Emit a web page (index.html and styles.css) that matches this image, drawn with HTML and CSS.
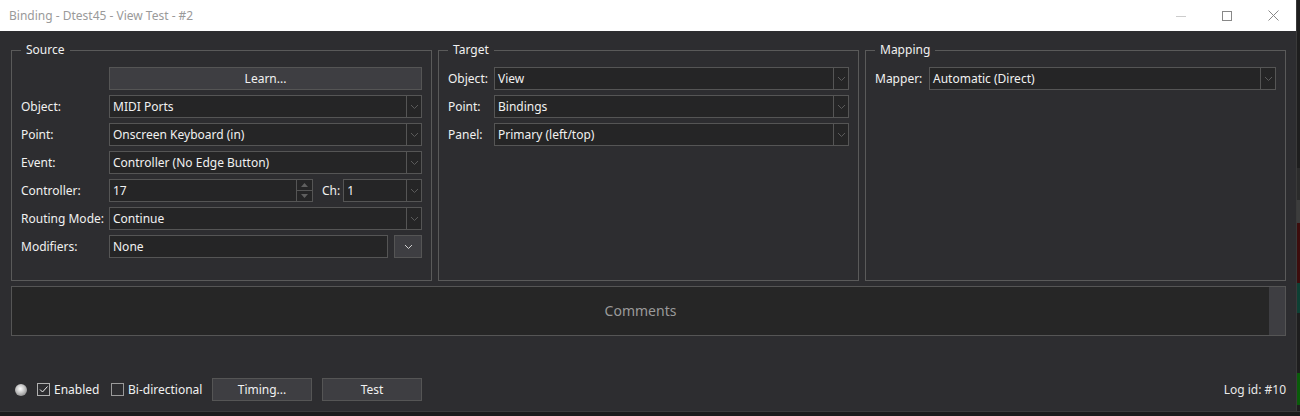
FILE: index.html
```html
<!DOCTYPE html>
<html lang="en">
<head>
    <meta charset="UTF-8">
    <title>Binding - Dtest45 - View Test - #2</title>
    <link rel="stylesheet" href="styles.css">
</head>
<body>
<div class="screen">
    <div class="top">
        <div class="window">
            <div class="titlebar">
                <span class="title">Binding - Dtest45 - View Test - #2</span>
                <div class="caption">
                    <div class="cap-btn">
                        <svg width="10" height="10" viewBox="0 0 10 10"><line x1="0" y1="5.5" x2="10" y2="5.5" stroke="#ccc" stroke-width="1"/></svg>
                    </div>
                    <div class="cap-btn">
                        <svg width="10" height="10" viewBox="0 0 10 10"><rect x="0.5" y="0.5" width="9" height="9" fill="none" stroke="#888" stroke-width="1"/></svg>
                    </div>
                    <div class="cap-btn">
                        <svg width="11" height="11" viewBox="0 0 11 11"><path d="M0.5 0.5 L10.5 10.5 M10.5 0.5 L0.5 10.5" stroke="#888" stroke-width="1"/></svg>
                    </div>
                </div>
            </div>

            <div class="content">
                <div class="groups">
                    <!-- Source -->
                    <fieldset class="group">
                        <legend>Source</legend>
                        <div class="form form-source">
                            <span></span>
                            <div class="btn">Learn...</div>

                            <label>Object:</label>
                            <div class="combo"><span class="value">MIDI Ports</span><span class="arrow"><svg width="7" height="4" viewBox="0 0 7 4"><path d="M0 0 L3.5 3.5 L7 0" fill="none" stroke="#5a5a5a"/></svg></span></div>

                            <label>Point:</label>
                            <div class="combo"><span class="value">Onscreen Keyboard (in)</span><span class="arrow"><svg width="7" height="4" viewBox="0 0 7 4"><path d="M0 0 L3.5 3.5 L7 0" fill="none" stroke="#5a5a5a"/></svg></span></div>

                            <label>Event:</label>
                            <div class="combo"><span class="value">Controller (No Edge Button)</span><span class="arrow"><svg width="7" height="4" viewBox="0 0 7 4"><path d="M0 0 L3.5 3.5 L7 0" fill="none" stroke="#5a5a5a"/></svg></span></div>

                            <label>Controller:</label>
                            <div class="split">
                                <div class="spin">
                                    <span class="value">17</span>
                                    <span class="spin-btns">
                                        <span class="spin-up"><svg width="7" height="4" viewBox="0 0 7 4"><path d="M0 4 L3.5 0 L7 4 Z" fill="#5f5f5f"/></svg></span>
                                        <span class="spin-down"><svg width="7" height="4" viewBox="0 0 7 4"><path d="M0 0 L3.5 4 L7 0 Z" fill="#5f5f5f"/></svg></span>
                                    </span>
                                </div>
                                <span class="ch-label">Ch:</span>
                                <div class="combo"><span class="value">1</span><span class="arrow"><svg width="7" height="4" viewBox="0 0 7 4"><path d="M0 0 L3.5 3.5 L7 0" fill="none" stroke="#5a5a5a"/></svg></span></div>
                            </div>

                            <label>Routing Mode:</label>
                            <div class="combo"><span class="value">Continue</span><span class="arrow"><svg width="7" height="4" viewBox="0 0 7 4"><path d="M0 0 L3.5 3.5 L7 0" fill="none" stroke="#5a5a5a"/></svg></span></div>

                            <label>Modifiers:</label>
                            <div class="split">
                                <div class="textbox"><span class="value">None</span></div>
                                <div class="btn btn-drop"><svg width="7" height="4" viewBox="0 0 7 4"><path d="M0 0 L3.5 3.5 L7 0" fill="none" stroke="#d0d0d0"/></svg></div>
                            </div>
                        </div>
                    </fieldset>

                    <!-- Target -->
                    <fieldset class="group">
                        <legend>Target</legend>
                        <div class="form form-target">
                            <label>Object:</label>
                            <div class="combo"><span class="value">View</span><span class="arrow"><svg width="7" height="4" viewBox="0 0 7 4"><path d="M0 0 L3.5 3.5 L7 0" fill="none" stroke="#5a5a5a"/></svg></span></div>

                            <label>Point:</label>
                            <div class="combo"><span class="value">Bindings</span><span class="arrow"><svg width="7" height="4" viewBox="0 0 7 4"><path d="M0 0 L3.5 3.5 L7 0" fill="none" stroke="#5a5a5a"/></svg></span></div>

                            <label>Panel:</label>
                            <div class="combo"><span class="value">Primary (left/top)</span><span class="arrow"><svg width="7" height="4" viewBox="0 0 7 4"><path d="M0 0 L3.5 3.5 L7 0" fill="none" stroke="#5a5a5a"/></svg></span></div>
                        </div>
                    </fieldset>

                    <!-- Mapping -->
                    <fieldset class="group">
                        <legend>Mapping</legend>
                        <div class="form form-mapping">
                            <label>Mapper:</label>
                            <div class="combo"><span class="value">Automatic (Direct)</span><span class="arrow"><svg width="7" height="4" viewBox="0 0 7 4"><path d="M0 0 L3.5 3.5 L7 0" fill="none" stroke="#5a5a5a"/></svg></span></div>
                        </div>
                    </fieldset>
                </div>

                <div class="comments">
                    <div class="comments-text">Comments</div>
                    <div class="scrollbar"></div>
                </div>

                <div class="footer">
                    <span class="led"></span>
                    <span class="check check-enabled">
                        <span class="box"><svg width="11" height="11" viewBox="0 0 11 11"><path d="M2 5.5 L4.5 8 L9.5 2.5" fill="none" stroke="#f0f0f0" stroke-width="1"/></svg></span>
                        Enabled
                    </span>
                    <span class="check check-bidi">
                        <span class="box"></span>
                        Bi-directional
                    </span>
                    <div class="btn btn-foot">Timing...</div>
                    <div class="btn btn-foot">Test</div>
                    <span class="log-id">Log id: #10</span>
                </div>
            </div>
        </div>
        <div class="side">
            <span class="side-a"></span>
            <span class="side-b"></span>
            <span class="side-c"></span>
            <span class="side-d"></span>
            <span class="side-e"></span>
        </div>
    </div>
    <div class="under"></div>
</div>
</body>
</html>
```

FILE: styles.css
```css
body {
    margin: 0;
    background-color: #1c1c1c;
    font-family: "Noto Sans", "Open Sans", sans-serif;
    font-size: 12px;
    color: #f1f1f1;
}

.screen {
    width: 1300px;
    height: 416px;
    display: flex;
    flex-direction: column;
}

.top {
    display: flex;
    height: 412px;
}

.window {
    width: 1296px;
    background-color: #2d2d30;
    display: flex;
    flex-direction: column;
}

/* Title bar */
.titlebar {
    height: 31px;
    background-color: #ffffff;
    display: flex;
    align-items: center;
    padding-left: 9px;
}

.title {
    flex: 1;
    color: #9a9a9a;
}

.caption {
    display: flex;
    height: 100%;
}

.cap-btn {
    width: 46px;
    display: flex;
    align-items: center;
    justify-content: center;
}

/* Main content */
.content {
    flex: 1;
    display: flex;
    flex-direction: column;
    padding: 11px 10px 0 11px;
}

.groups {
    display: grid;
    grid-template-columns: repeat(3, 1fr);
    gap: 6px;
    height: 239px;
}

.group {
    margin: 0;
    min-width: 0;
    border: 1px solid #5a5a5a;
    padding: 9px 9px 0 9px;
}

.group legend {
    padding: 0 5px;
    line-height: 16px;
    color: #f1f1f1;
}

.form {
    display: grid;
    grid-auto-rows: 23px;
    row-gap: 5px;
    align-items: center;
}

.form-source {
    grid-template-columns: 88px 1fr;
}

.form-target {
    grid-template-columns: 46px 1fr;
}

.form-mapping {
    grid-template-columns: 54px 1fr;
}

.form label {
    white-space: nowrap;
}

/* Controls */
.combo,
.spin,
.textbox {
    height: 23px;
    box-sizing: border-box;
    display: flex;
    border: 1px solid #555555;
    background-color: #252526;
}

.value {
    flex: 1;
    padding-left: 3px;
    line-height: 21px;
    white-space: nowrap;
    overflow: hidden;
}

.combo .arrow {
    width: 14px;
    border-left: 1px solid #555555;
    display: flex;
    align-items: center;
    justify-content: center;
}

.split {
    display: flex;
    align-items: center;
    height: 23px;
}

.split .combo {
    flex: 1;
}

.spin {
    width: 204px;
}

.spin-btns {
    width: 15px;
    border-left: 1px solid #555555;
    display: flex;
    flex-direction: column;
}

.spin-up,
.spin-down {
    flex: 1;
    display: flex;
    align-items: center;
    justify-content: center;
}

.spin-up {
    border-bottom: 1px solid #555555;
}

.ch-label {
    margin: 0 3px 0 9px;
}

.textbox {
    flex: 1;
}

.btn {
    height: 23px;
    box-sizing: border-box;
    border: 1px solid #555555;
    background-color: #3e3e42;
    display: flex;
    align-items: center;
    justify-content: center;
    color: #f1f1f1;
}

.btn-drop {
    width: 28px;
    margin-left: 6px;
}

/* Comments */
.comments {
    margin-top: 5px;
    height: 50px;
    box-sizing: border-box;
    border: 1px solid #555555;
    background-color: #262626;
    display: flex;
}

.comments-text {
    flex: 1;
    display: flex;
    align-items: center;
    justify-content: center;
    padding-bottom: 1px;
    font-size: 14px;
    color: #9a9a9a;
}

.scrollbar {
    width: 16px;
    background-color: #3e3e42;
}

/* Footer */
.footer {
    margin-top: 42px;
    height: 23px;
    display: flex;
    align-items: center;
    padding-left: 4px;
}

.led {
    width: 12px;
    height: 12px;
    border-radius: 50%;
    background: radial-gradient(circle at 45% 40%, #ffffff 0%, #c8c8c8 40%, #6a6a6a 100%);
    margin-right: 10px;
}

.check {
    display: flex;
    align-items: center;
    gap: 4px;
}

.check-enabled {
    width: 74px;
}

.check-bidi {
    width: 101px;
}

.check .box {
    width: 13px;
    height: 13px;
    box-sizing: border-box;
    border: 1px solid #b0b0b0;
    display: flex;
    align-items: center;
    justify-content: center;
}

.check-bidi .box {
    border-color: #9a9a9a;
}

.btn-foot {
    width: 100px;
    margin-right: 10px;
}

.log-id {
    margin-left: auto;
    color: #e8e8e8;
}

/* Background app peeking around the window */
.side {
    width: 4px;
    display: flex;
    flex-direction: column;
    background-color: #1e1e1e;
    border-left: 1px solid #3a3a3a;
    box-sizing: border-box;
}

.side-a {
    margin-top: 168px;
    height: 32px;
    background-color: #2b2b2b;
}

.side-b {
    height: 23px;
    background-color: #3c3c3c;
}

.side-c {
    height: 60px;
    background-color: #3d0d0d;
}

.side-d {
    height: 30px;
    background-color: #0e4034;
}

.side-e {
    margin-top: 60px;
    height: 32px;
    background-color: #0a5c0a;
}

.under {
    height: 4px;
    background-color: #1b1b1b;
    border-top: 1px solid #3a3a3a;
}
```
